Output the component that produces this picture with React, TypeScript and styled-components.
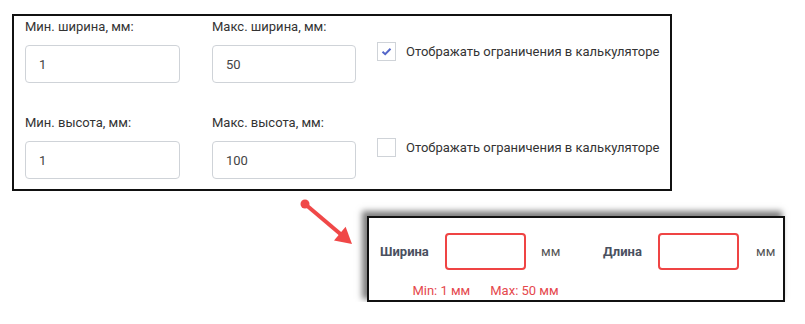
import React from 'react'
import styled, { createGlobalStyle } from 'styled-components'

const GlobalStyle = createGlobalStyle`
  body {
    margin: 0;
    background: #fff;
    font-family: Roboto, "Liberation Sans", sans-serif;
  }
`

const Page = styled.div`
  padding: 14px 0 0 12px;
`

const SettingsBox = styled.div`
  width: 660px;
  box-sizing: border-box;
  border: 2px solid #111;
  padding: 3px 0 10px 11px;
  display: grid;
  grid-template-columns: 155px 144px auto;
  column-gap: 32px;
  row-gap: 32px;
`

const Field = styled.div`
  display: flex;
  flex-direction: column;
`

const FieldLabel = styled.label`
  font-size: 13px;
  line-height: 16px;
  color: #333;
  margin-bottom: 10px;
`

const TextInput = styled.input`
  box-sizing: border-box;
  width: 100%;
  height: 38px;
  border: 1px solid #cfd3d8;
  border-radius: 4px;
  padding: 0 13px;
  font: 13px Roboto, "Liberation Sans", sans-serif;
  color: #444;
  outline: none;
`

const CheckRow = styled.label`
  display: flex;
  align-items: center;
  gap: 10px;
  margin: 23px 0 0 -11px;
  height: 19px;
  font-size: 13px;
  color: #333;
`

const Box = styled.span`
  box-sizing: border-box;
  width: 19px;
  height: 19px;
  border: 1px solid #cfd3d8;
  display: flex;
  align-items: center;
  justify-content: center;
  flex-shrink: 0;
`

const Annotation = styled.div`
  display: flex;
  align-items: flex-start;
  margin: 4px 0 0 284px;
`

const Arrow = styled.svg`
  flex-shrink: 0;
  margin-right: 9px;
`

const Calculator = styled.div`
  margin-top: 21px;
  width: 418px;
  height: 86px;
  box-sizing: border-box;
  border: 2px solid #111;
  background: #fff;
  box-shadow: -4px -4px 6px 1px rgba(0, 0, 0, 0.5);
  padding: 15px 0 0 11px;
  display: flex;
`

const Group = styled.div<{ $labelWidth: number; $unitGap: number; $unitWidth: number }>`
  display: grid;
  grid-template-columns: ${(p) => p.$labelWidth}px 81px ${(p) => p.$unitWidth}px;
  grid-template-rows: 37px auto;
  row-gap: 10px;
  align-items: center;

  > .unit {
    padding-left: ${(p) => p.$unitGap}px;
  }
`

const CalcLabel = styled.span`
  font-size: 13px;
  font-weight: 700;
  color: #4a5060;
`

const CalcInput = styled.input`
  box-sizing: border-box;
  width: 81px;
  height: 37px;
  border: 2px solid #ef4444;
  border-radius: 4px;
  outline: none;
`

const Unit = styled.span`
  font-size: 13px;
  color: #555;
`

const Hint = styled.div`
  grid-column: 2;
  justify-self: center;
  white-space: nowrap;
  display: flex;
  gap: 20px;
  font-size: 13px;
  line-height: 15px;
  color: #e5484d;
`

const Check = () => (
  <svg width="11" height="9" viewBox="0 0 11 9">
    <path d="M1.5 4.8 L4.2 7.2 L9.5 1.8" fill="none" stroke="#5366c9" strokeWidth="2" />
  </svg>
)

const rows = [
  { min: 'Мин. ширина, мм:', max: 'Макс. ширина, мм:', minValue: '1', maxValue: '50', checked: true },
  { min: 'Мин. высота, мм:', max: 'Макс. высота, мм:', minValue: '1', maxValue: '100', checked: false },
]

export default function App() {
  return (
    <Page>
      <GlobalStyle />
      <SettingsBox>
        {rows.map((r) => (
          <React.Fragment key={r.min}>
            <Field>
              <FieldLabel>{r.min}</FieldLabel>
              <TextInput defaultValue={r.minValue} />
            </Field>
            <Field>
              <FieldLabel>{r.max}</FieldLabel>
              <TextInput defaultValue={r.maxValue} />
            </Field>
            <CheckRow>
              <Box>{r.checked && <Check />}</Box>
              Отображать ограничения в калькуляторе
            </CheckRow>
          </React.Fragment>
        ))}
      </SettingsBox>

      <Annotation>
        <Arrow width="62" height="54" viewBox="0 0 62 54">
          <circle cx="9" cy="9" r="4.5" fill="#f04848" />
          <line x1="9" y1="9" x2="45" y2="39.5" stroke="#f04848" strokeWidth="4" />
          <polygon points="56,49 38,45.5 49.6,31.7" fill="#f04848" />
        </Arrow>
        <Calculator>
          <Group $labelWidth={65} $unitGap={15} $unitWidth={77}>
            <CalcLabel>Ширина</CalcLabel>
            <CalcInput />
            <Unit className="unit">мм</Unit>
            <Hint>
              <span>Min: 1 мм</span>
              <span>Max: 50 мм</span>
            </Hint>
          </Group>
          <Group $labelWidth={55} $unitGap={17} $unitWidth={40}>
            <CalcLabel>Длина</CalcLabel>
            <CalcInput />
            <Unit className="unit">мм</Unit>
          </Group>
        </Calculator>
      </Annotation>
    </Page>
  )
}
